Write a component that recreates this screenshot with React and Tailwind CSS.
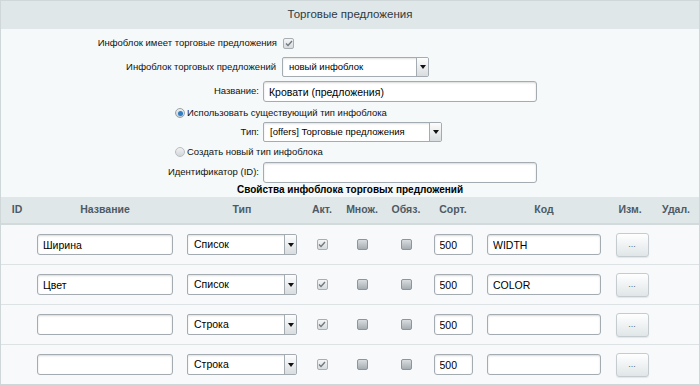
import React from "react";

const font = { fontFamily: '"Liberation Sans", Arial, sans-serif' };

const TextInput = ({ value = "", className = "" }) => (
  <input
    readOnly
    value={value}
    className={`h-[21px] rounded-[3px] border border-[#a4acb1] bg-white px-[5px] text-[10.5px] text-black shadow-[inset_0_1px_2px_rgba(0,0,0,0.15)] outline-none ${className}`}
  />
);

const Select = ({ value, className = "", text = "text-[10.5px]" }) => (
  <div
    className={`flex h-[20px] items-stretch overflow-hidden rounded-[2px] border border-[#a4acb1] bg-white shadow-[inset_0_1px_2px_rgba(0,0,0,0.12)] ${className}`}
  >
    <div className={`flex flex-1 items-center px-[6px] text-black ${text}`}>
      {value}
    </div>
    <div className="flex w-[12px] items-center justify-center border-l border-[#a4acb1] bg-gradient-to-b from-[#fdfdfd] to-[#d9dddf]">
      <svg width="6" height="4" viewBox="0 0 6 4">
        <path d="M0 0h6L3 4z" fill="#111" />
      </svg>
    </div>
  </div>
);

const Checkbox = ({ checked }) =>
  checked ? (
    <span className="flex h-[11px] w-[11px] items-center justify-center rounded-[2px] border border-[#a8afb3] bg-gradient-to-b from-[#f4f5f6] to-[#d6dbde]">
      <svg width="8" height="7" viewBox="0 0 8 7">
        <path d="M1 3.5l2 2L7 1" stroke="#6f777c" strokeWidth="1.3" fill="none" />
      </svg>
    </span>
  ) : (
    <span className="block h-[11px] w-[11px] rounded-[2px] border border-[#8d959a] bg-gradient-to-b from-[#d9dde0] to-[#a6adb2]" />
  );

const Radio = ({ checked }) =>
  checked ? (
    <span className="flex h-[10px] w-[10px] items-center justify-center rounded-full border border-[#9aa2a7] bg-gradient-to-b from-[#eef0f1] to-[#c8cdd0]">
      <span className="block h-[5px] w-[5px] rounded-full bg-[#2f7dc4]" />
    </span>
  ) : (
    <span className="block h-[10px] w-[10px] rounded-full border border-[#b9bec1] bg-gradient-to-b from-[#f0f1f2] to-[#d3d7d9]" />
  );

const DotsButton = () => (
  <div className="flex h-[24px] w-[33px] items-center justify-center rounded-[3px] border border-[#c5ccd0] bg-gradient-to-b from-[#ffffff] to-[#e0e6e8] text-[9px] leading-none text-[#5a6a78] shadow-[0_1px_1px_rgba(0,0,0,0.08)]">
    ...
  </div>
);

const rows = [
  { name: "Ширина", type: "Список", code: "WIDTH" },
  { name: "Цвет", type: "Список", code: "COLOR" },
  { name: "", type: "Строка", code: "" },
  { name: "", type: "Строка", code: "" },
];

const cols =
  "grid grid-cols-[32px_144px_130px_30px_50px_38px_56px_126px_46px_46px]";

export default function App() {
  return (
    <div
      style={font}
      className="h-[385px] w-[700px] overflow-hidden border border-[#cfd7d9] bg-[#f5f9f9] text-[10.5px] text-[#111]"
    >
      <div className="flex h-[28px] items-center justify-center bg-[#dfe7e9] text-[11.5px] text-[#2f3a42]">
        Торговые предложения
      </div>

      <div className="pt-[5px] text-[9.5px]">
        <div className="flex h-[18px] items-center">
          <div className="w-[282px] pr-[6px] text-right">
            Инфоблок имеет торговые предложения
          </div>
          <Checkbox checked />
        </div>

        <div className="mt-[5px] flex h-[20px] items-center">
          <div className="w-[281px] pr-[6px] text-right">
            Инфоблок торговых предложений
          </div>
          <Select value="новый инфоблок" text="text-[9.5px]" className="w-[147px]" />
        </div>

        <div className="mt-[4px] flex h-[21px] items-center">
          <div className="w-[262px] pr-[4px] text-right">Название:</div>
          <TextInput value="Кровати (предложения)" className="w-[274px]" />
        </div>

        <div className="mt-[2px] flex h-[18px] items-center gap-[2px] pl-[174px]">
          <Radio checked />
          <span>Использовать существующий тип инфоблока</span>
        </div>

        <div className="flex h-[20px] items-center">
          <div className="w-[262px] pr-[4px] text-right">Тип:</div>
          <Select
            value="[offers] Торговые предложения"
            text="text-[9.5px]"
            className="w-[179px]"
          />
        </div>

        <div className="flex h-[20px] items-center gap-[2px] pl-[174px]">
          <Radio />
          <span>Создать новый тип инфоблока</span>
        </div>

        <div className="flex h-[20px] items-center">
          <div className="w-[262px] pr-[4px] text-right">Идентификатор (ID):</div>
          <TextInput className="w-[274px]" />
        </div>

        <div className="flex h-[15px] items-center justify-center text-[10px] font-bold text-black">
          Свойства инфоблока торговых предложений
        </div>
      </div>

      <div
        className={`${cols} h-[28px] items-center border-b-2 border-[#d2dadc] bg-[#dfe7e9] text-center font-bold text-[#4d5a64]`}
      >
        <div>ID</div>
        <div>Название</div>
        <div>Тип</div>
        <div>Акт.</div>
        <div>Множ.</div>
        <div>Обяз.</div>
        <div>Сорт.</div>
        <div>Код</div>
        <div>Изм.</div>
        <div>Удал.</div>
      </div>

      {rows.map((r, i) => (
        <div
          key={i}
          className={`${cols} h-[40px] items-center border-b border-[#dde3e5] bg-[#f7f9fa]`}
        >
          <div />
          <div className="flex justify-center">
            <TextInput value={r.name} className="w-[136px]" />
          </div>
          <div className="flex justify-center">
            <Select value={r.type} className="h-[21px] w-[110px]" />
          </div>
          <div className="flex justify-center">
            <Checkbox checked />
          </div>
          <div className="flex justify-center">
            <Checkbox />
          </div>
          <div className="flex justify-center">
            <Checkbox />
          </div>
          <div className="flex justify-center">
            <TextInput value="500" className="w-[39px]" />
          </div>
          <div className="flex justify-center">
            <TextInput value={r.code} className="w-[114px]" />
          </div>
          <div className="flex justify-center pl-[4px]">
            <DotsButton />
          </div>
          <div />
        </div>
      ))}
    </div>
  );
}
